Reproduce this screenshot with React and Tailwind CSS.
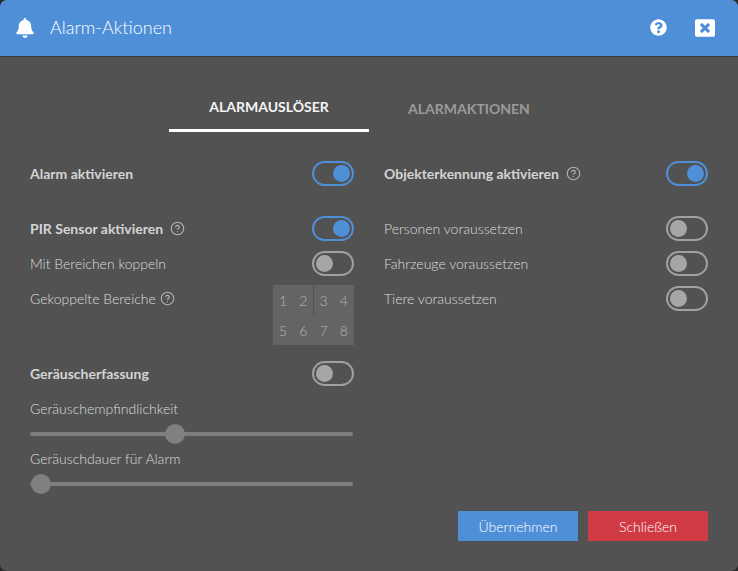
import { CircleHelp } from 'lucide-react';
import { FaBell, FaQuestionCircle, FaWindowClose } from 'react-icons/fa';

const Hint = ({ className = 'ml-[7px]' }) => (
  <CircleHelp size={15} strokeWidth={1.75} className={`text-[#b4b4b4] ${className}`} />
);

const Toggle = ({ on }) => (
  <div
    className={`flex h-[25px] w-[42px] items-center rounded-full border-2 px-[2px] ${
      on ? 'justify-end border-[#4f8fd8]' : 'justify-start border-[#a0a0a0]'
    }`}
  >
    <div className={`h-[17px] w-[17px] rounded-full ${on ? 'bg-[#4f8fd8]' : 'bg-[#a6a6a6]'}`} />
  </div>
);

const Row = ({ label, bold, hint, on, className = '' }) => (
  <div className={`flex h-[25px] items-center justify-between ${className}`}>
    <div className={`flex items-center text-[14px] ${bold ? 'font-bold text-[#d4d4d4]' : 'font-light text-[#dcdcdc]'}`}>
      {label}
      {hint && <Hint />}
    </div>
    <Toggle on={on} />
  </div>
);

const Slider = ({ label, left }) => (
  <div>
    <p className="h-[20px] text-[14px] leading-[20px] font-light text-[#dcdcdc]">{label}</p>
    <div className="relative mt-[5px] flex h-[20px] items-center pr-px">
      <div className="h-[4px] w-full rounded-full bg-[#7e7e7e]" />
      <div
        className="absolute top-0 h-[20px] w-[20px] rounded-full bg-[#808080]"
        style={{ left }}
      />
    </div>
  </div>
);

const zones = [1, 2, 3, 4, 5, 6, 7, 8];

const App = () => {
  return (
    <div className="flex h-[571px] w-[738px] flex-col overflow-hidden bg-[#2a2a2a] font-['Lato',sans-serif]">
      <div className="flex flex-1 flex-col overflow-hidden rounded-[7px] bg-[#525252]">
        <header className="flex h-[56px] items-center bg-[#4f8fd8] pr-[23px] pb-px pl-[15px] text-white">
          <FaBell size={20} />
          <h1 className="ml-[15px] text-[18px] font-light">Alarm-Aktionen</h1>
          <FaQuestionCircle size={17} className="ml-auto" />
          <FaWindowClose size={20} className="ml-[28px]" />
        </header>
        <div className="h-px bg-[#3a3a3a]" />

        <nav className="mt-[24px] flex justify-center text-[14px] font-bold">
          <div className="flex h-[51px] w-[200px] items-center justify-center border-b-[3px] border-white pt-[3px] text-[#f4f4f4]">
            ALARMAUSLÖSER
          </div>
          <div className="flex h-[51px] w-[200px] items-center justify-center pt-[3px] text-[#9a9a9a]">
            ALARMAKTIONEN
          </div>
        </nav>

        <div className="mt-[29px] grid grid-cols-2 gap-x-[30px] px-[30px]">
          <div>
            <Row label="Alarm aktivieren" bold on />
            <Row label="PIR Sensor aktivieren" bold hint on className="mt-[30px]" />
            <Row label="Mit Bereichen koppeln" className="mt-[10px]" />
            <div className="mt-[10px] flex items-start justify-between">
              <div className="flex h-[25px] items-center text-[14px] font-light text-[#dcdcdc]">
                Gekoppelte Bereiche
                <Hint className="ml-[4px]" />
              </div>
              <div className="relative mt-[-1px] grid h-[60px] w-[81px] grid-cols-4 bg-[#646464] text-[14px] font-light text-[#b4b4b4]">
                {zones.map((zone) => (
                  <span key={zone} className="flex h-[30px] items-center justify-center pt-px">
                    {zone}
                  </span>
                ))}
                <div className="absolute top-0 left-[40px] h-[30px] w-px bg-[#525252]" />
              </div>
            </div>
            <Row label="Geräuscherfassung" bold className="mt-[16px]" />
            <div className="mt-[13px]">
              <Slider label="Geräuschempfindlichkeit" left="135px" />
            </div>
            <div className="mt-[5px]">
              <Slider label="Geräuschdauer für Alarm" left="1px" />
            </div>
          </div>

          <div>
            <Row label="Objekterkennung aktivieren" bold hint on />
            <Row label="Personen voraussetzen" className="mt-[30px]" />
            <Row label="Fahrzeuge voraussetzen" className="mt-[10px]" />
            <Row label="Tiere voraussetzen" className="mt-[10px]" />
          </div>
        </div>

        <footer className="mt-[17px] flex justify-end gap-[10px] px-[30px] text-[14px] font-light text-white">
          <button type="button" className="h-[30px] w-[120px] bg-[#4f8fd8]">
            Übernehmen
          </button>
          <button type="button" className="h-[30px] w-[120px] bg-[#d03a45]">
            Schließen
          </button>
        </footer>
      </div>
    </div>
  );
};

export default App;
